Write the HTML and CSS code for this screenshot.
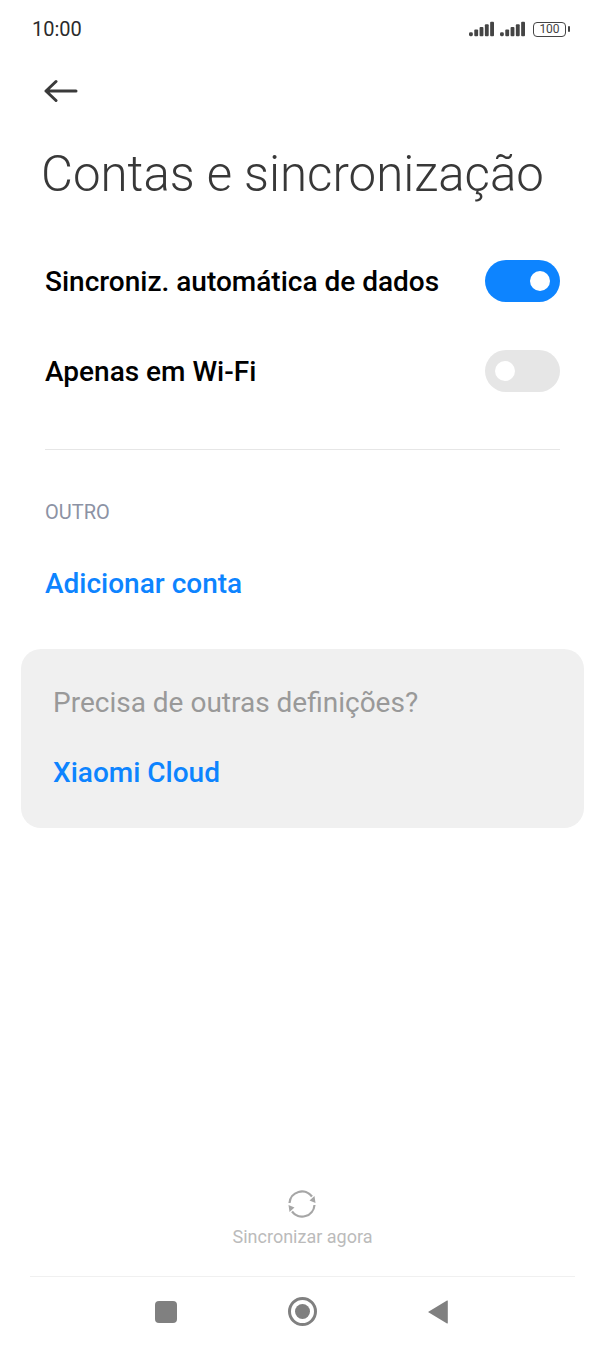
FILE: index.html
```html
<!DOCTYPE html>
<html lang="pt">
<head>
<meta charset="utf-8">
<title>Contas e sincronização</title>
<link rel="stylesheet" href="styles.css">
</head>
<body>
<div class="screen">
  <header class="status">
    <span class="time">10:00</span>
    <div class="status-icons">
      <svg class="signal" width="25" height="18" viewBox="0 0 26 18"><g fill="#444"><rect x="0" y="12.500" width="4" height="4" rx="1.500"/><rect x="5.500" y="9.500" width="4" height="7" rx="1"/><rect x="11" y="7" width="4" height="9.500" rx="1"/><rect x="16.500" y="4" width="4" height="12.500" rx="1"/><rect x="22" y="1.500" width="4" height="15" rx="1"/></g></svg>
      <svg class="signal" width="25" height="18" viewBox="0 0 26 18"><g fill="#444"><rect x="0" y="12.500" width="4" height="4" rx="1.500"/><rect x="5.500" y="9.500" width="4" height="7" rx="1"/><rect x="11" y="7" width="4" height="9.500" rx="1"/><rect x="16.500" y="4" width="4" height="12.500" rx="1"/><rect x="22" y="1.500" width="4" height="15" rx="1"/></g></svg>
      <div class="battery"><span class="battery-level">100</span></div>
    </div>
  </header>
  <button class="back" aria-label="Voltar">
    <svg width="34" height="24" viewBox="0 0 34 24"><path d="M32 12H2M12 2.500L2 12l10 9.500" fill="none" stroke="#3a3a3a" stroke-width="3" stroke-linecap="round" stroke-linejoin="round"/></svg>
  </button>
  <h1 class="title">Contas e sincronização</h1>
  <section class="toggles">
    <div class="row"><span class="row-label">Sincroniz. automática de dados</span><span class="switch switch-on"><span class="knob"></span></span></div>
    <div class="row"><span class="row-label">Apenas em Wi-Fi</span><span class="switch switch-off"><span class="knob"></span></span></div>
  </section>
  <hr class="divider">
  <div class="section-head">OUTRO</div>
  <a class="link add-account">Adicionar conta</a>
  <section class="card">
    <p class="card-q">Precisa de outras definições?</p>
    <a class="link">Xiaomi Cloud</a>
  </section>
  <div class="spacer"></div>
  <div class="sync">
    <svg width="32" height="32" viewBox="0 0 32 32"><g fill="none" stroke="#a6a6a6" stroke-width="2.200"><path d="M3.500 15A12.500 12.500 0 0 1 26 8.500"/><path d="M28.500 17A12.500 12.500 0 0 1 6 23.500"/></g><path d="M29.500 15l-6-2.500 5-4.500zM2.500 17l6 2.500-5 4.500z" fill="#a6a6a6"/></svg>
    <span class="sync-label">Sincronizar agora</span>
  </div>
  <nav class="navbar">
    <span class="nav-square"></span>
    <span class="nav-home"><span class="nav-dot"></span></span>
    <svg width="20" height="26" viewBox="1 0 20 26"><path d="M1 13 20 1.500a.5.5 0 0 1 .8.4v22.200a.5.5 0 0 1-.8.4z" fill="#808080"/></svg>
  </nav>
</div>
</body>
</html>
```
FILE: styles.css
```css
* { box-sizing: border-box; }
html, body { margin: 0; padding: 0; background: #fff; }
body { font-family: Roboto, "Noto Sans", sans-serif; }
.screen { width: 605px; height: 1346px; display: flex; flex-direction: column; overflow: hidden; }
.status { height: 58px; padding: 16px 39px 0 32px; display: flex; justify-content: space-between; align-items: flex-start; }
.time { font-size: 20px; line-height: 26px; color: #2b2b2b; }
.status-icons { display: flex; align-items: center; gap: 6px; height: 26px; }
.signal { display: block; }
.battery { width: 33px; height: 15px; margin-left: 2px; border: 1.500px solid #444; border-radius: 4px; display: flex; align-items: center; justify-content: center; position: relative; }
.battery::after { content: ""; position: absolute; right: -5px; top: 3px; width: 2.500px; height: 6px; background: #444; border-radius: 1px; }
.battery-level { font-size: 12px; color: #444; line-height: 12px; }
.back { width: 34px; height: 24px; margin: 21px 0 0 44px; padding: 0; border: 0; background: none; display: block; }
.back svg { display: block; }
.title { margin: 39px 0 0 41px; font-size: 49.200px; line-height: 64px; font-weight: 300; color: #383838; white-space: nowrap; }
.toggles { margin-top: 30px; padding: 0 45px; }
.row { height: 90px; display: flex; align-items: center; justify-content: space-between; }
.row-label { font-size: 28px; font-weight: 500; color: #000; line-height: 34px; padding-top: 2px; }
.switch { width: 75px; height: 42px; border-radius: 21px; display: flex; align-items: center; }
.switch-on { background: #0d84ff; justify-content: flex-end; padding-right: 10px; }
.switch-off { background: #e6e6e6; padding-left: 10px; }
.knob { width: 20px; height: 20px; border-radius: 50%; background: #fff; }
.divider { margin: 33px 45px 0; border: 0; height: 1px; background: #e6e6e6; }
.section-head { margin: 50px 0 0 45px; font-size: 20px; line-height: 24px; color: #8c92a4; }
.link { display: block; font-size: 28px; line-height: 34px; font-weight: 500; color: #0d84ff; }
.add-account { margin: 43px 0 0 45px; }
.card { margin: 48px 21px 0; height: 179px; padding: 37px 32px 0; border-radius: 20px; background: #f0f0f0; }
.card-q { margin: 0 0 36px; font-size: 28px; line-height: 34px; color: #999; }
.spacer { flex: 1; }
.sync { display: flex; flex-direction: column; align-items: center; height: 81px; }
.sync svg { display: block; margin: 1px 2px 0 0; }
.sync-label { margin-top: 5px; font-size: 18px; line-height: 24px; color: #bbb; }
.navbar { margin: 8px 30px 0; height: 70px; border-top: 1px solid #f0f0f0; display: flex; align-items: center; justify-content: space-between; padding: 0 127px 0 125px; }
.nav-square { width: 22px; height: 22px; border-radius: 4px; background: #808080; }
.nav-home { width: 29px; height: 29px; border: 3px solid #808080; border-radius: 50%; display: flex; align-items: center; justify-content: center; }
.nav-dot { width: 15px; height: 15px; border-radius: 50%; background: #808080; }
```
